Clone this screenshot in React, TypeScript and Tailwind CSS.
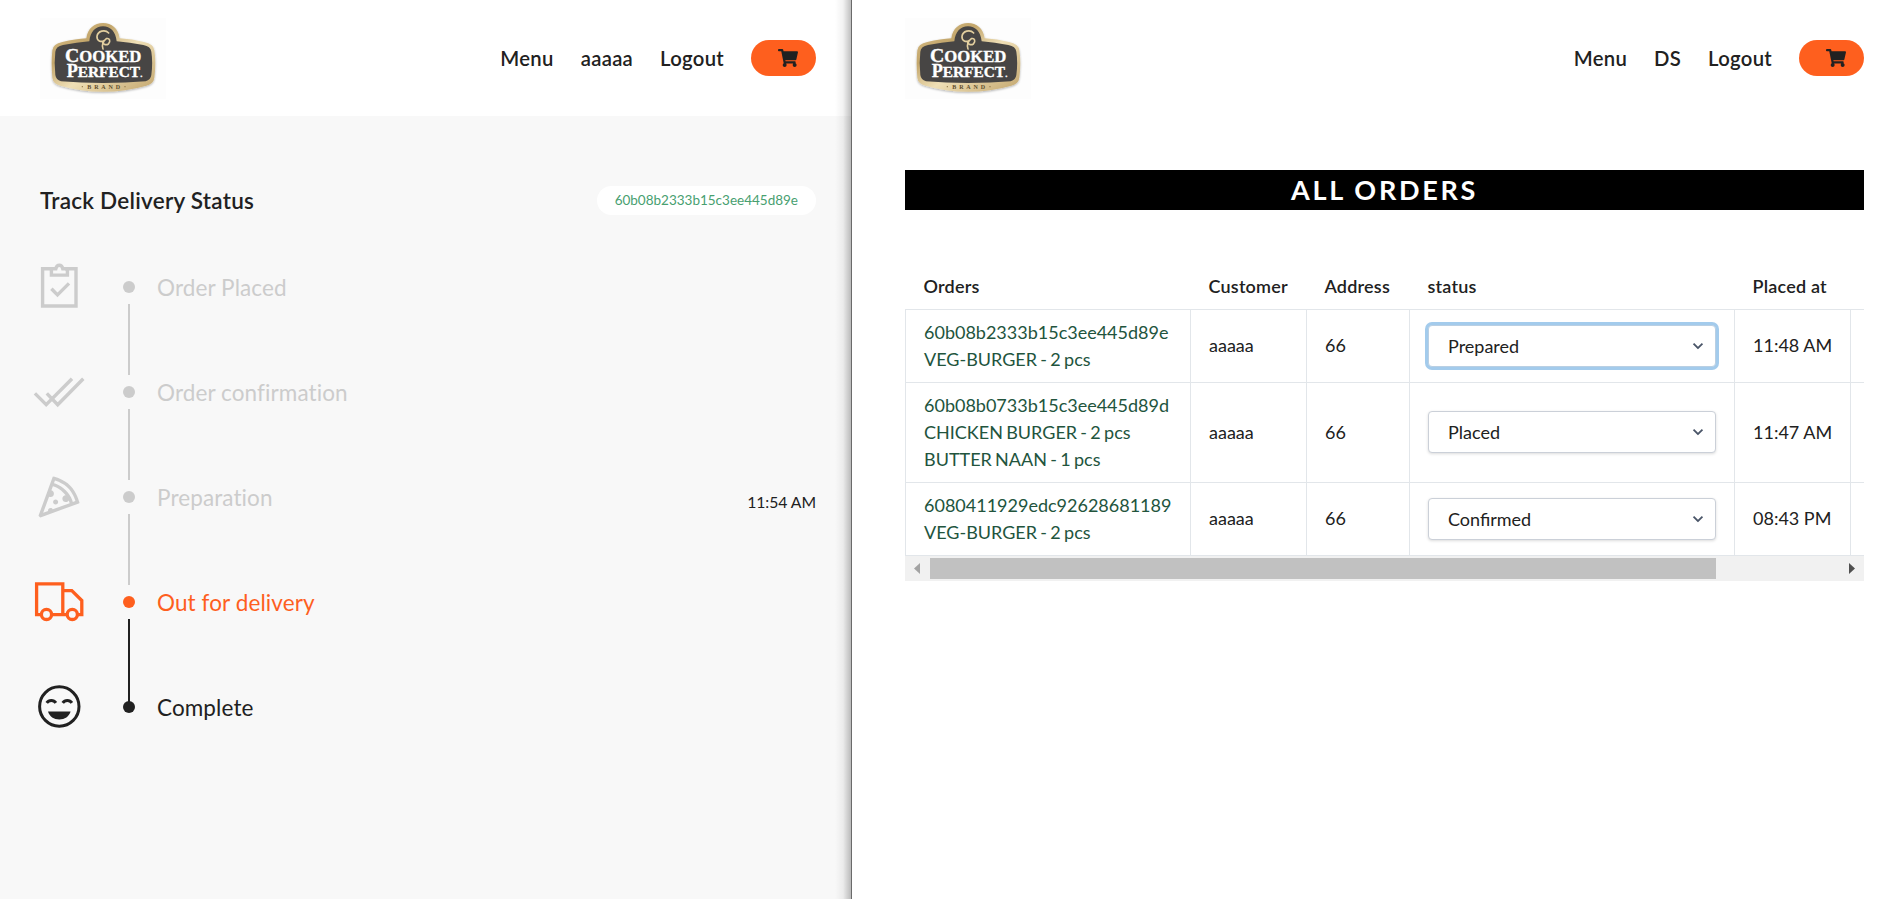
import React from "react";
import { FaShoppingCart } from "react-icons/fa";
import { LiaPizzaSliceSolid } from "react-icons/lia";

const INK = "#212121";
const MUTED = "#cccccc";
const ACCENT = "#fe5f1e";

function Logo() {
  return (
    <svg className="h-[81px] w-[126px]" viewBox="33 21 378 243" aria-label="Cooked Perfect">
      <defs>
        <linearGradient id="gold" x1="0" y1="0" x2="1" y2="1">
          <stop offset="0" stopColor="#d9c08a" />
          <stop offset="0.3" stopColor="#c3a66b" />
          <stop offset="0.55" stopColor="#efdfb6" />
          <stop offset="1" stopColor="#c2a56c" />
        </linearGradient>
        <filter id="soft" x="-10%" y="-10%" width="120%" height="125%">
          <feDropShadow dx="0" dy="3" stdDeviation="3.5" floodColor="#000" floodOpacity="0.3" />
        </filter>
      </defs>
      <rect x="33" y="21" width="378" height="243" fill="#fdfdfd" />
      <path
        filter="url(#soft)"
        fill="url(#gold)"
        d="M100 93 Q140 84 172 82 C176 52 196 36 222 36 C248 36 268 52 272 82 Q310 84 345 93 Q374 98 376 118 Q382 155 376 200 Q374 218 352 224 Q290 242 222 242 Q155 242 94 224 Q72 218 70 200 Q66 155 70 118 Q72 98 100 93Z"
      />
      <path
        fill="#474544"
        d="M102 102 Q144 94 181 91 C184 62 200 46 222 46 C244 46 260 62 263 91 Q302 94 343 102 Q365 106 367 122 Q372 155 367 192 Q365 206 350 211 Q290 216 222 216 Q155 216 96 211 Q81 206 79 192 Q75 155 79 122 Q81 106 102 102Z"
      />
      <path
        fill="none"
        stroke="#e3cf9f"
        strokeWidth="5"
        strokeLinecap="round"
        d="M239 66 C228 54 206 60 204 76 C203 90 216 95 226 88 M222 114 C217 104 222 90 232 83 C242 80 246 92 238 99 C232 103 224 101 221 95"
      />
      <g fill="#ffffff" fontFamily="'Liberation Serif', serif" fontWeight="700" stroke="#ffffff" strokeWidth="1">
        <text x="108" y="153" fontSize="57" textLength="229" lengthAdjust="spacingAndGlyphs">
          C<tspan fontSize="48">OOKED</tspan>
        </text>
        <text x="113" y="197" fontSize="54" textLength="227" lengthAdjust="spacingAndGlyphs">
          P<tspan fontSize="46">ERFECT</tspan><tspan fontSize="26">.</tspan>
        </text>
      </g>
      <text x="175" y="233" fontSize="18" fontWeight="700" fontFamily="'Liberation Serif', serif" fill="#5d4d2d" textLength="98">BRAND</text>
      <circle cx="160" cy="227" r="2" fill="#8d7444" />
      <circle cx="288" cy="227" r="2" fill="#8d7444" />
    </svg>
  );
}

function Header({ user }: { user: string }) {
  return (
    <header className="flex h-[116px] items-center justify-between">
      <Logo />
      <nav className="flex items-center gap-[27px] text-[20.25px] font-semibold leading-[27px] tracking-[0.3px] text-[#212121]">
        <span>Menu</span>
        <span>{user}</span>
        <span>Logout</span>
        <span className="flex h-9 w-[65px] items-center justify-end rounded-full bg-[#fe5f1e] pr-[18px]">
          <FaShoppingCart size={20} />
        </span>
      </nav>
    </header>
  );
}

function ClipboardIcon() {
  return (
    <svg className="size-[54px]" viewBox="0 0 54 54" fill="none" stroke="currentColor" strokeWidth="3.4">
      <path d="M21 8.800H10.600v37.200h33.400V8.800H33" />
      <path d="M19.400 7.500v7.600h16V7.500M19 8.800h4.800c.5-2.300 1.700-3.500 3.500-3.500s3 1.200 3.500 3.500H36" />
      <path d="M19.400 28.700l6.100 6.200 11.500-11.500" />
    </svg>
  );
}

function DoubleCheckIcon() {
  return (
    <svg className="size-[54px]" viewBox="0 0 54 54" fill="none" stroke="currentColor" strokeWidth="3.4">
      <path d="M2.900 28.400l11.300 11.300 25.800-25.900" />
      <path d="M14.800 28.400l10.900 11.300 25.600-25.900" />
    </svg>
  );
}

function TruckIcon() {
  return (
    <svg className="size-[54px]" viewBox="0 0 54 54" fill="none" stroke="currentColor" strokeWidth="3.300">
      <path d="M8.500 39.700H4.600V8.800h26.200v30.900H20.500M30.800 15.600h9l10 9.900v14.200H45.500M35 39.700H20.500" />
      <circle cx="14.500" cy="39.400" r="5.100" />
      <circle cx="40.300" cy="39.400" r="5.100" />
    </svg>
  );
}

function LaughIcon() {
  return (
    <svg className="size-[54px]" viewBox="0 0 54 54" fill="none" stroke="currentColor" strokeWidth="3">
      <circle cx="27.300" cy="26.500" r="19.700" />
      <path d="M14.700 22.800c2.200-3.200 7-3.200 9.200 0M30.700 22.800c2.200-3.200 7-3.200 9.200 0" />
      <path d="M16 31.600h22.600c-1.400 5-6 8-11.300 8s-9.900-3-11.300-8z" fill="currentColor" stroke="none" />
    </svg>
  );
}

const steps = [
  { label: "Order Placed", icon: <ClipboardIcon />, color: MUTED },
  { label: "Order confirmation", icon: <DoubleCheckIcon />, color: MUTED },
  { label: "Preparation", icon: <LiaPizzaSliceSolid size={54} />, color: MUTED, time: "11:54 AM" },
  { label: "Out for delivery", icon: <TruckIcon />, color: ACCENT },
  { label: "Complete", icon: <LaughIcon />, color: INK },
];

function Tracker() {
  return (
    <section className="flex w-[852px] shrink-0 flex-col border-r border-[#6a6a6a] bg-[#f8f8f8]">
      <div className="bg-white pl-10 pr-[35px]">
        <Header user="aaaaa" />
      </div>
      <div className="flex items-center justify-between pb-[45px] pl-10 pr-[35px] pt-[70px]">
        <h1 className="text-[22.5px] font-semibold leading-[29px] tracking-[0.25px] text-[#212121]">
          Track Delivery Status
        </h1>
        <span className="h-[29px] rounded-full bg-white px-[18px] text-[13.5px] leading-[28px] text-[#48a070]">
          60b08b2333b15c3ee445d89e
        </span>
      </div>
      <ul className="pl-8 pr-[35px]">
        {steps.map((s, i) => (
          <li key={s.label} className="flex h-[105px] items-start" style={{ color: s.color }}>
            <div className="h-[54px] w-[54px]">{s.icon}</div>
            <div className="ml-[37px] flex h-full w-3 flex-col items-center pt-[21px]">
              <span className="size-3 shrink-0 rounded-full bg-current" />
              {i < 3 && <span className="mt-[11px] h-[71px] w-[2px] shrink-0 bg-current" />}
              {i === 3 && <span className="mt-[11px] h-[84px] w-[2px] shrink-0 bg-[#212121]" />}
            </div>
            <span className="ml-[22px] mt-[12px] text-[22.5px] leading-[31px] tracking-[0.1px] [font-variant-ligatures:none]">
              {s.label}
            </span>
            {s.time && (
              <span className="ml-auto mt-[20px] text-[15.75px] leading-[24px] tracking-[-0.05px] text-[#212121]">
                {s.time}
              </span>
            )}
          </li>
        ))}
      </ul>
    </section>
  );
}

const orders = [
  { lines: ["60b08b2333b15c3ee445d89e", "VEG-BURGER - 2 pcs"], status: "Prepared", time: "11:48 AM", focus: true },
  { lines: ["60b08b0733b15c3ee445d89d", "CHICKEN BURGER - 2 pcs", "BUTTER NAAN - 1 pcs"], status: "Placed", time: "11:47 AM" },
  { lines: ["6080411929edc92628681189", "VEG-BURGER - 2 pcs"], status: "Confirmed", time: "08:43 PM" },
];

function StatusSelect({ value, focus }: { value: string; focus?: boolean }) {
  return (
    <div
      className={
        "flex h-[42px] w-72 items-center justify-between rounded border bg-white pl-[19px] pr-[8px] " +
        (focus ? "border-[#b9cfe3] shadow-[0_0_0_3px_#a3cbec]" : "border-[#cbd0d8] shadow-[0_1px_3px_0_rgba(0,0,0,0.14)]")
      }
    >
      <span className="pt-px">{value}</span>
      <svg className="size-[18px] fill-[#4a5568]" viewBox="0 0 20 20">
        <path d="M9.293 12.950l.707.707L15.657 8l-1.414-1.414L10 10.828 5.757 6.586 4.343 8z" />
      </svg>
    </div>
  );
}

function Orders() {
  return (
    <section className="w-[1035px] pl-[53px] pr-[23px]">
      <Header user="DS" />
      <h1 className="mt-[54px] h-10 bg-black text-center text-[27px] font-bold leading-[40px] tracking-[0.1em] text-white">
        ALL ORDERS
      </h1>
      <div className="mt-[54px] overflow-hidden">
        <table className="w-[1075px] table-fixed border-collapse text-left text-[18px] leading-[27px] text-[#212121]">
          <colgroup>
            <col className="w-[285px]" />
            <col className="w-[116px]" />
            <col className="w-[103px]" />
            <col className="w-[325px]" />
            <col className="w-[116px]" />
            <col className="w-[130px]" />
          </colgroup>
          <thead>
            <tr>
              {["Orders", "Customer", "Address", "status", "Placed at", ""].map((h) => (
                <th key={h} className="h-[45px] whitespace-nowrap px-[18px] py-0 font-semibold tracking-[0.2px]">{h}</th>
              ))}
            </tr>
          </thead>
          <tbody className="[&_td]:border [&_td]:border-[#e2e6ea] [&_td]:px-[18px] [&_td]:py-0">
            {orders.map((o) => (
              <tr key={o.lines[0]} className={o.lines.length === 3 ? "h-[100px]" : "h-[73px]"}>
                <td className="whitespace-nowrap text-[#22543d] [word-spacing:-1.3px]">
                  {o.lines.map((l) => (
                    <p key={l}>{l}</p>
                  ))}
                </td>
                <td>aaaaa</td>
                <td>66</td>
                <td>
                  <StatusSelect value={o.status} focus={o.focus} />
                </td>
                <td className="whitespace-nowrap">{o.time}</td>
                <td />
              </tr>
            ))}
          </tbody>
        </table>
        <div className="flex h-[25px] items-center justify-between bg-[#f1f1f1] px-[9px]">
          <svg className="h-[11px] w-[6px] shrink-0 fill-[#a3a3a3]" viewBox="0 0 6 11"><path d="M6 0v11L0 5.500z" /></svg>
          <div className="ml-[10px] h-[21px] w-[786px] bg-[#c1c1c1]" />
          <svg className="ml-auto h-[11px] w-[6px] shrink-0 fill-[#505050]" viewBox="0 0 6 11"><path d="M0 0v11l6-5.500z" /></svg>
        </div>
      </div>
    </section>
  );
}

export default function App() {
  return (
    <div className="flex h-[899px] w-[1887px] overflow-hidden bg-white font-['Lato',sans-serif]">
      <div className="relative flex">
        <Tracker />
        <div className="pointer-events-none absolute inset-y-0 right-px w-4 bg-linear-to-r from-transparent via-black/5 to-black/25" />
      </div>
      <Orders />
    </div>
  );
}
